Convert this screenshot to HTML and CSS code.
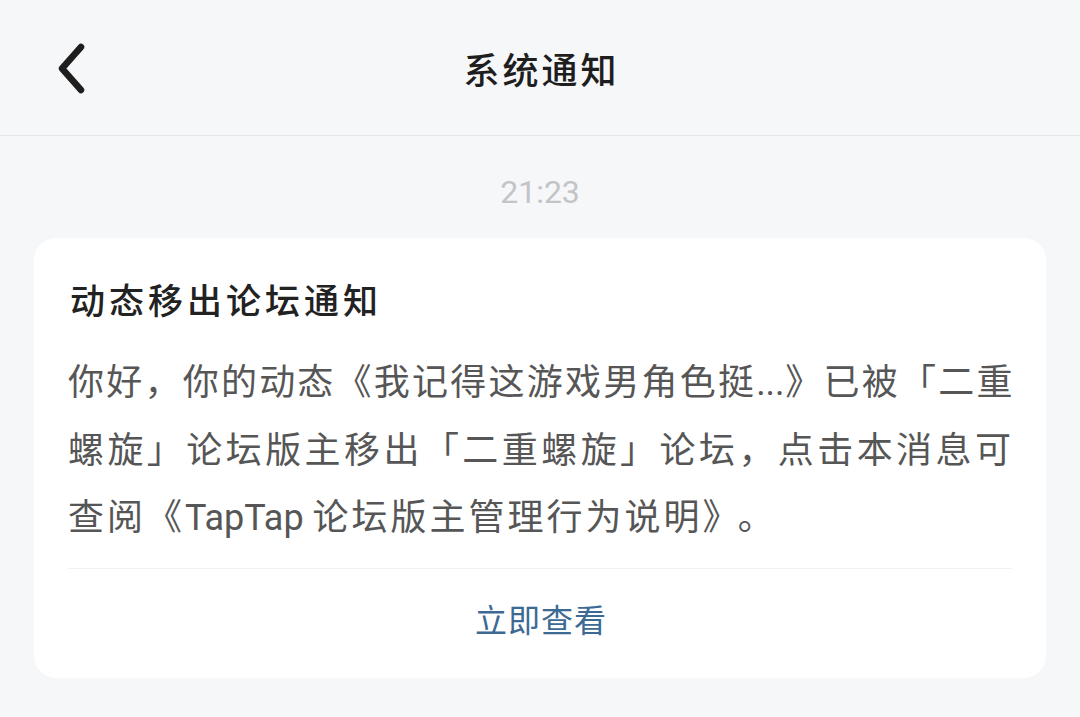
FILE: index.html
```html
<!DOCTYPE html>
<html>
<head>
	<meta charset="UTF-8">
	<title>系统通知</title>
	<link rel="stylesheet" href="styles.css">
</head>
<body>
	<header class="topbar">
		<button class="back" aria-label="返回">
			<svg width="40" height="56" viewBox="0 0 40 56">
				<polyline points="25,6 6,27.5 25,49" fill="none" stroke="#1e1e1e" stroke-width="6.5" stroke-linecap="round" stroke-linejoin="round"/>
			</svg>
		</button>
		<h1 class="title">系统通知</h1>
	</header>

	<main class="feed">
		<div class="time">21:23</div>

		<section class="card">
			<h2 class="card-title">动态移出论坛通知</h2>
			<div class="card-body">
				<span class="line full tight">你好，你的动态《我记得这游戏男角色挺<span class="dots">...</span>》已被「二重</span>
				<span class="line full">螺旋」论坛版主移出「二重螺旋」论坛，点击本消息可</span>
				<span class="line">查阅《<span class="latin">TapTap</span>论坛版主管理行为说明》<span class="stop">。</span></span>
			</div>
			<div class="card-action">立即查看</div>
		</section>
	</main>
</body>
</html>
```

FILE: styles.css
```css
html, body {
	margin: 0;
	padding: 0;
}

body {
	background: #f6f7f9;
	font-family: Roboto, "Noto Sans CJK SC", sans-serif;
	width: 1080px;
	height: 717px;
	overflow: hidden;
}

.topbar {
	position: relative;
	height: 135px;
	border-bottom: 1px solid #e6e7ea;
	display: flex;
	align-items: center;
	justify-content: center;
}

.back {
	position: absolute;
	left: 56px;
	top: 41px;
	padding: 0;
	border: 0;
	background: none;
	line-height: 0;
}

.title {
	margin: 0;
	font-size: 36px;
	font-weight: 500;
	color: #1e1e1e;
	letter-spacing: 3px;
	padding-left: 3px;
}

.feed {
	padding: 0 34px;
}

.time {
	text-align: center;
	font-family: Roboto, sans-serif;
	font-size: 32px;
	color: #c3c4c6;
	padding-top: 36px;
	height: 66px;
	line-height: 40px;
}

.card {
	background: #fff;
	border-radius: 22px;
	padding: 0 34px 0 36px;
}

.card-title {
	margin: 0;
	padding-top: 40px;
	font-size: 35px;
	font-weight: 500;
	color: #222;
	letter-spacing: 4px;
	line-height: 50px;
}

.card-body {
	padding-top: 22px;
	padding-bottom: 15px;
	font-size: 36px;
	line-height: 67.5px;
	color: #565656;
	letter-spacing: 3px;
	border-bottom: 1px solid #f0f1f3;
	margin-left: -2px;
}

.line {
	display: block;
	white-space: nowrap;
}

.line.full {
	text-align: justify;
	text-align-last: justify;
	margin-right: -2px;
}

.line.tight {
	letter-spacing: 1.6px;
}

.dots {
	letter-spacing: 0;
}

.latin {
	letter-spacing: 0;
	margin-right: 9px;
}

.stop {
	margin-left: 14px;
}

.card-action {
	text-align: center;
	font-size: 32px;
	color: #3c6a94;
	letter-spacing: 1px;
	height: 109px;
	line-height: 104px;
}
```
